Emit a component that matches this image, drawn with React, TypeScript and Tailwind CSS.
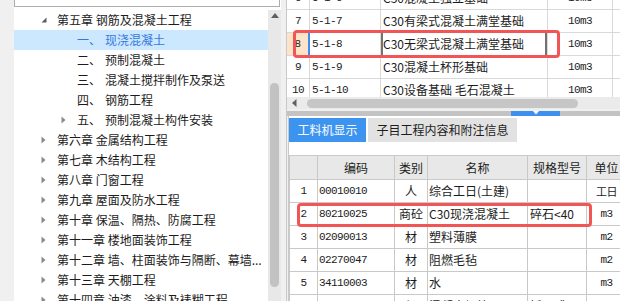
import React from "react";

const cjk = "font-['Noto_Sans_CJK_SC',sans-serif]";
const mono = "font-['Liberation_Mono',monospace] text-[11px] tracking-[-0.6px]";

type TreeNode = {
  level: 0 | 1;
  label: string;
  prefix?: string;
  arrow?: "open" | "closed";
  selected?: boolean;
};

const tree: TreeNode[] = [
  { level: 0, arrow: "open", label: "第五章 钢筋及混凝土工程" },
  { level: 1, prefix: "一、", label: "现浇混凝土", selected: true },
  { level: 1, prefix: "二、", label: "预制混凝土" },
  { level: 1, prefix: "三、", label: "混凝土搅拌制作及泵送" },
  { level: 1, prefix: "四、", label: "钢筋工程" },
  { level: 1, prefix: "五、", label: "预制混凝土构件安装", arrow: "closed" },
  { level: 0, arrow: "closed", label: "第六章 金属结构工程" },
  { level: 0, arrow: "closed", label: "第七章 木结构工程" },
  { level: 0, arrow: "closed", label: "第八章 门窗工程" },
  { level: 0, arrow: "closed", label: "第九章 屋面及防水工程" },
  { level: 0, arrow: "closed", label: "第十章 保温、隔热、防腐工程" },
  { level: 0, arrow: "closed", label: "第十一章 楼地面装饰工程" },
  { level: 0, arrow: "closed", label: "第十二章 墙、柱面装饰与隔断、幕墙..." },
  { level: 0, arrow: "closed", label: "第十三章 天棚工程" },
  { level: 0, arrow: "closed", label: "第十四章 油漆、涂料及裱糊工程" },
];

const quotaRows = [
  { n: "6", code: "5-1-6", name: "C30混凝土独立基础", unit: "10m3" },
  { n: "7", code: "5-1-7", name: "C30有梁式混凝土满堂基础", unit: "10m3" },
  { n: "8", code: "5-1-8", name: "C30无梁式混凝土满堂基础", unit: "10m3", active: true },
  { n: "9", code: "5-1-9", name: "C30混凝土杯形基础", unit: "10m3" },
  { n: "10", code: "5-1-10", name: "C30设备基础 毛石混凝土", unit: "10m3" },
];

const materialRows = [
  { n: "1", code: "00010010", type: "人", name: "综合工日(土建)", spec: "", unit: "工日" },
  { n: "2", code: "80210025", type: "商砼", name: "C30现浇混凝土", spec: "碎石<40", unit: "m3" },
  { n: "3", code: "02090013", type: "材", name: "塑料薄膜", spec: "", unit: "m2" },
  { n: "4", code: "02270047", type: "材", name: "阻燃毛毡", spec: "", unit: "m2" },
  { n: "5", code: "34110003", type: "材", name: "水", spec: "", unit: "m3" },
  { n: "6", code: "", type: "机", name: "混凝土振捣器", spec: "插入式", unit: "台班", box: true },
];

function Arrow({ kind }: { kind?: "open" | "closed" }) {
  if (kind === "open") {
    return (
      <svg width="6" height="6" viewBox="0 0 6 6">
        <polygon points="5.5,0.5 5.5,5.5 0.5,5.5" fill="#5c5c5c" />
      </svg>
    );
  }
  if (kind === "closed") {
    return (
      <svg width="5" height="8" viewBox="0 0 5 8">
        <polygon points="0.5,0.5 4.5,4 0.5,7.5" fill="#8a8a8a" />
      </svg>
    );
  }
  return null;
}

function ChapterTree() {
  return (
    <div className="flex w-[267px] flex-col bg-white">
      {/* search box, only its bottom edge shows */}
      <div className="h-[7px] w-[266px] shrink-0 border-x border-b border-[#adadad]" />
      <div className="mt-[3px] flex min-h-0 flex-1">
        <div className={`w-[254px] overflow-hidden text-[12px] text-[#1c1c1c] ${cjk}`}>
          {tree.map((node, i) => (
            <div
              key={i}
              className={`flex h-[20px] items-center whitespace-nowrap ${
                node.level === 0 ? "pl-[27px]" : "pl-[47px]"
              } ${node.selected ? "bg-[#cce8ff] text-[#3579dc]" : ""}`}
            >
              <span className="flex w-[16px] items-center">
                <Arrow kind={node.arrow} />
              </span>
              {node.prefix && <span className="mr-[4px]">{node.prefix}</span>}
              <span>{node.label}</span>
            </div>
          ))}
        </div>
        <div className="flex w-[13px] flex-col items-center bg-[#e8e8e8]">
          <svg className="mt-[3px] shrink-0" width="8" height="5" viewBox="0 0 8 5">
            <polygon points="4,0 8,5 0,5" fill="#606060" />
          </svg>
          <div className="mt-[65px] h-[204px] w-[9px] shrink-0 rounded-full bg-[#c2c2c2]" />
        </div>
      </div>
    </div>
  );
}

function QuotaTable() {
  return (
    <div className="h-[97px] shrink-0 overflow-hidden bg-white">
      <div className="mt-[-13px] text-[12px] text-[#1c1c1c]">
        {quotaRows.map((r) => (
          <div key={r.n} className="flex h-[23px]">
            <div
              className={`flex w-[23px] shrink-0 items-center justify-center border-b ${mono} ${
                r.active
                  ? "border-r-2 border-b-[#d9d9d9] border-r-[#3d8cf5] bg-[#fde3c8]"
                  : "border-r border-[#d9d9d9]"
              }`}
            >
              {r.n}
            </div>
            <div className={`flex w-[71px] shrink-0 items-center border-r border-b border-[#d9d9d9] pl-[2px] ${mono}`}>
              {r.code}
            </div>
            <div
              className={`flex w-[167px] shrink-0 items-center border-r border-b border-[#d9d9d9] pl-[2px] ${cjk} ${
                r.active ? "shadow-[inset_2px_0_0_#727272,inset_-2px_0_0_#727272]" : ""
              }`}
            >
              {r.name}
            </div>
            <div className={`flex w-[65px] shrink-0 items-center justify-center border-r border-b border-[#d9d9d9] ${mono}`}>
              {r.unit}
            </div>
            <div className="w-[40px] shrink-0 border-b border-[#d9d9d9]" />
          </div>
        ))}
      </div>
    </div>
  );
}

function MaterialTable() {
  const cell = "flex shrink-0 items-center border-r border-b border-[#c9c9c9]";
  return (
    <div className="mt-[13px] border-t border-[#c9c9c9] text-[12px] text-[#1c1c1c]">
      <div className={`flex h-[24px] bg-[#e8e8e8] ${cjk}`}>
        <div className={`${cell} w-[29px] border-l`} />
        <div className={`${cell} w-[77px] justify-center`}>编码</div>
        <div className={`${cell} w-[33px] justify-center`}>类别</div>
        <div className={`${cell} w-[100px] justify-center`}>名称</div>
        <div className={`${cell} w-[59px] justify-center`}>规格型号</div>
        <div className={`${cell} w-[40px] justify-center`}>单位</div>
      </div>
      {materialRows.map((r) => (
        <div key={r.n} className="flex h-[23px]">
          <div className={`${cell} w-[29px] justify-center border-l ${mono}`}>{r.n}</div>
          <div className={`${cell} w-[77px] pl-[1px] ${mono}`}>
            {r.box ? <span className="ml-[4px] mt-[8px] h-[8px] w-[8px] border border-[#6a6a6a]" /> : r.code}
          </div>
          <div className={`${cell} w-[33px] justify-center ${cjk}`}>{r.type}</div>
          <div className={`${cell} w-[100px] pl-[1px] ${cjk}`}>{r.name}</div>
          <div className={`${cell} w-[59px] pl-[2px] ${cjk}`}>{r.spec}</div>
          <div className={`${cell} w-[40px] justify-center ${mono}`}>
            {r.unit === "工日" || r.unit === "台班" ? <span className={cjk}>{r.unit}</span> : r.unit}
          </div>
        </div>
      ))}
    </div>
  );
}

export default function App() {
  return (
    <div className="relative flex h-[301px] w-[620px] overflow-hidden bg-[#f0f0f0]">
      <div className="flex w-[286px] shrink-0">
        <div className="w-[14px] bg-[#f0f0f0]" />
        <ChapterTree />
        <div className="w-[5px] bg-[#f0f0f0]" />
      </div>

      <div className="flex min-h-0 min-w-0 flex-1 flex-col border-l border-[#c9c9c9]">
        <QuotaTable />

        {/* horizontal scrollbar */}
        <div className="flex h-[12px] shrink-0 items-center bg-[#ebebeb]">
          <svg className="ml-[5px]" width="5" height="8" viewBox="0 0 5 8">
            <polygon points="4.5,0 4.5,8 0,4" fill="#606060" />
          </svg>
          <div className="ml-[10px] h-[9px] w-[271px] rounded-full bg-[#c6c6c6]" />
        </div>

        {/* splitter */}
        <div className="mt-[2px] flex h-[5px] shrink-0 bg-[#c3c3c3]">
          <div className="ml-[224px] flex w-[49px] justify-center bg-[#3f8ff0]">
            <svg width="6" height="4" viewBox="0 0 6 4">
              <polygon points="0,0 6,0 3,3.5" fill="#ffffff" />
            </svg>
          </div>
        </div>

        <div className="ml-[1px] min-h-0 flex-1 overflow-hidden border-l border-[#c9c9c9] bg-white pt-[2px]">
          <div className={`flex h-[24px] gap-[2px] text-[12px] ${cjk}`}>
            <div className="flex w-[77px] items-center justify-center bg-[#3d94f0] text-white">工料机显示</div>
            <div className="flex w-[149px] items-center justify-center bg-[#e2e2e2] text-[#1c1c1c]">
              子目工程内容和附注信息
            </div>
          </div>
          <MaterialTable />
        </div>
      </div>

      {/* red highlight annotations */}
      <div className="pointer-events-none absolute left-[293px] top-[30px] h-[28px] w-[267px] rounded-[4px] border-[3px] border-[#f25555]" />
      <div className="pointer-events-none absolute left-[297px] top-[203px] h-[24px] w-[295px] rounded-[4px] border-[3px] border-[#f25555]" />
    </div>
  );
}
